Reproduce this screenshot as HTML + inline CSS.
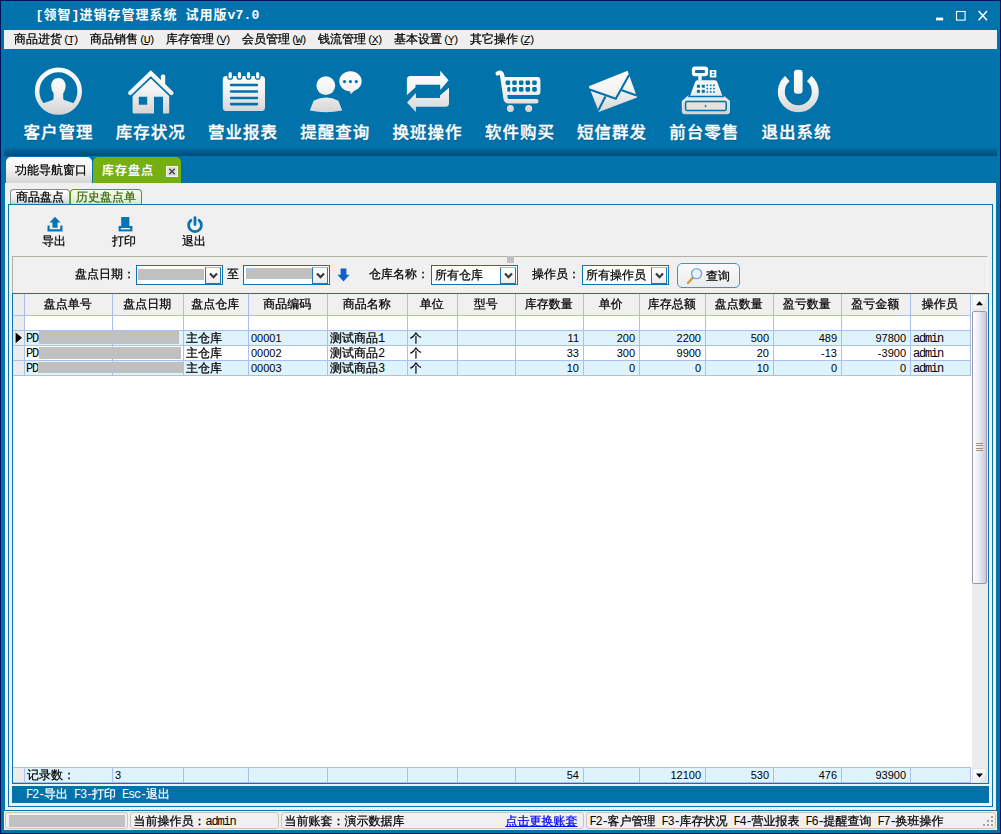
<!DOCTYPE html>
<html lang="zh-CN">
<head>
<meta charset="utf-8">
<title>[领智]进销存管理系统 试用版v7.0</title>
<style>
*{box-sizing:border-box;margin:0;padding:0}
html,body{width:1001px;height:834px;overflow:hidden;background:#0272aa}
body{position:relative;font-family:"Liberation Sans","WenQuanYi Zen Hei","Noto Sans CJK SC",sans-serif;font-size:12px;line-height:14px;color:#000;-webkit-text-stroke-width:.25px}
.abs{position:absolute}
#win{position:absolute;left:0;top:0;width:1001px;height:834px;background:#0272aa;border:1px solid #00145a}
/* title */
#title{-webkit-text-stroke-width:0;position:absolute;left:35.500px;top:8px;height:16px;line-height:16px;color:#fff;font-family:"Liberation Mono","Noto Sans CJK SC",monospace;font-weight:bold;font-size:13px;letter-spacing:.2px;white-space:pre}
#title span{letter-spacing:1px}
/* menu */
#menu{position:absolute;left:4px;top:30px;width:993px;height:19px;background:#efefef}
#menu span{position:absolute;top:2px;line-height:14px;white-space:pre}
em{font-style:normal;font-family:"Liberation Mono",monospace;font-size:12px;letter-spacing:-1.2px;-webkit-text-stroke-width:0}
#menu em{margin-left:1px;letter-spacing:-2.200px;font-size:11.500px}
/* toolbar */
.tl{-webkit-text-stroke-width:.35px;position:absolute;width:100px;top:122px;transform:scaleY(.95);transform-origin:50% 2px;margin-left:-.6px;text-align:center;font-family:"Liberation Sans","Noto Sans CJK SC",sans-serif;font-weight:500;font-size:16.500px;letter-spacing:1px;padding-left:1px;line-height:22px;color:#fff;text-shadow:0 1px 1px rgba(0,50,90,.45)}
#shadow{position:absolute;left:4px;top:147px;width:993px;height:9px;background:linear-gradient(#0272aa,#00649a 35%,#005484 75%,#004a78)}
/* tabs */
#tab1{position:absolute;left:6px;top:157px;width:86px;height:26px;border-radius:5px 5px 0 0;background:linear-gradient(#ffffff,#f4f4f4 45%,#d4d4d4);line-height:26px;padding-left:9px}
#tab2{-webkit-text-stroke-width:0;position:absolute;left:93px;top:157px;width:88px;height:26px;border-radius:5px 5px 0 0;background:#76b010;color:#fff;font-family:"Liberation Sans","Noto Sans CJK SC",sans-serif;font-weight:bold;line-height:28px;padding-left:9px;letter-spacing:1px}
#tab2 i{position:absolute;left:73px;top:9px;width:12px;height:11px;background:#dedede;border:1px solid #f4f4f4}
#tab2 i svg{position:absolute;left:0;top:0}
#content{position:absolute;left:5px;top:183px;width:991px;height:627px;background:#f0f0f0}
#st1{position:absolute;left:10px;top:189px;width:60px;height:15px;border:1px solid #8a8a8a;border-bottom:none;border-radius:4px 4px 0 0;background:linear-gradient(#ffffff,#ececec 60%,#cfcfcf);line-height:14px;padding-left:5px}
#st2{position:absolute;left:70px;top:189px;width:72px;height:16px;border:1px solid #5a9a1a;border-bottom:none;border-radius:4px 4px 0 0;background:linear-gradient(#f6fbee,#e8f0dc 60%,#d4e4c0);line-height:14px;padding-left:5px;color:#3c6a10}
#panel{position:absolute;left:8px;top:204px;width:985px;height:603px;border:1px solid #0a74b0;background:#f0f0f0}
.bl{position:absolute;top:234px;width:60px;text-align:center;line-height:14px}
#inner{position:absolute;left:12px;top:256px;width:976px;height:38px;border:1px solid #b4b0a4;border-bottom:none;border-right-color:#f8f8f8}
.lb{position:absolute;top:267px;line-height:14px;white-space:pre}
.cb{position:absolute;top:265px;height:20px;border:1px solid #0a74b0;background:#fff}
.cb b{position:absolute;left:3px;top:2px;font-weight:normal;line-height:14px;white-space:pre}
.dd{position:absolute;right:1px;top:1px;width:16px;height:17px;border:1px solid #1c7ab4;background:linear-gradient(#ffffff,#ececec);border-top-color:#9cc0dc}
.dd svg{position:absolute;left:-.5px;top:-1px}
.rd{position:absolute;background:#c0c0c0}
#qbtn{position:absolute;left:677px;top:263px;width:63px;height:25px;border:1px solid #4a90b8;border-radius:5px;background:linear-gradient(#fafafa,#ececec)}
#qbtn span{position:absolute;left:28px;top:5px;line-height:14px}
#grid{position:absolute;left:12px;top:293px;width:977px;height:491px;border:1px solid #0a74b0;background:#fff;overflow:hidden}
.hl{position:absolute;left:1px;width:957px;height:1px;background:#a9c0ee}
.vl{position:absolute;width:1px;background:#a9c0ee}
.hc{margin-left:-.7px;position:absolute;top:4px;height:14px;line-height:14px;text-align:center;white-space:pre}
.c{position:absolute;height:14px;line-height:14px;padding:0 2px;white-space:pre;overflow:hidden}
.c.t{font-size:11px;-webkit-text-stroke-width:0}
.c.n{text-align:right;padding-right:4px;font-size:11px;-webkit-text-stroke-width:0}
.c.s{font-family:"Liberation Serif","WenQuanYi Zen Hei",serif;letter-spacing:.5px}
#vs{position:absolute;left:960px;top:1px;width:16px;height:489px;background:#ececec}
.sb{position:absolute;left:0;width:15px;height:16px;background:linear-gradient(135deg,#fff,#f4f4f4 60%,#dcdcdc);border:1px solid #e4e4e4}
.sb svg{position:absolute;left:-1px;top:-1px}
#th{position:absolute;left:0;top:17px;width:15px;height:273px;border:1px solid #9898a8;border-radius:2px;background:linear-gradient(90deg,#ffffff,#ececf4 45%,#c8c8d8)}
#th i{position:absolute;left:3px;top:131px;width:7px;height:8px;background:repeating-linear-gradient(#a09474 0,#a09474 1px,transparent 1px,transparent 2.300px)}
#bluebar{position:absolute;left:12px;top:786px;width:977px;height:17px;background:#0272aa;color:#fff;line-height:16px;padding-left:14px;white-space:pre}
#sbline{position:absolute;left:5px;top:810px;width:991px;height:1px;background:#0a74b0}
#status{position:absolute;left:5px;top:811px;width:991px;height:19px;background:#f0f0f0;box-shadow:-1px 0 0 #f0f0f0,1px 0 0 #f0f0f0}
.sp{position:absolute;top:1px;height:17px;border:1px solid #c8c4b8;border-radius:3px}
.sp span{position:absolute;left:2.500px;top:1px;line-height:14px;white-space:pre}
.sp a{position:absolute;right:5.500px;top:1px;line-height:14px;color:#0000ff;text-decoration:underline;white-space:pre}
</style>
</head>
<body>
<div id="win"></div>
<div id="title">[<span>领智</span>]<span>进销存管理系统</span> <span>试用版</span>v7.0</div>
<!--WINCTL-->
<svg class="abs" style="left:930px;top:5px" width="64" height="20" viewBox="930 5 64 20"><rect x="936" y="17.600" width="7.200" height="2.800" fill="#fff"/><rect x="956.500" y="11.500" width="8.600" height="8.600" fill="none" stroke="#fff" stroke-width="1.100"/><path d="M978.600 11l8.400 9.200M987 11l-8.400 9.200" stroke="#fff" stroke-width="1.500" fill="none"/></svg>
<div id="menu">
<span style="left:10px">商品进货<em>(<u>T</u>)</em></span>
<span style="left:86px">商品销售<em>(<u>U</u>)</em></span>
<span style="left:162px">库存管理<em>(<u>V</u>)</em></span>
<span style="left:238px">会员管理<em>(<u>W</u>)</em></span>
<span style="left:314px">钱流管理<em>(<u>X</u>)</em></span>
<span style="left:390px">基本设置<em>(<u>Y</u>)</em></span>
<span style="left:466px">其它操作<em>(<u>Z</u>)</em></span>
</div>
<!--TOOLBAR-->
<svg id="tbsvg" class="abs" style="left:0;top:0" width="1001" height="160" viewBox="0 0 1001 160">
<defs>
<linearGradient id="wg" gradientUnits="userSpaceOnUse" x1="0" y1="68" x2="0" y2="115"><stop offset="0" stop-color="#ffffff"/><stop offset=".45" stop-color="#f4f4f4"/><stop offset="1" stop-color="#d2d2d2"/></linearGradient>
<clipPath id="uc"><circle cx="58.4" cy="91.2" r="20.600"/></clipPath>
</defs>
<g fill="url(#wg)" stroke="none">
<!-- 1 user -->
<circle cx="58.4" cy="91.2" r="21.3" fill="none" stroke="url(#wg)" stroke-width="4.6"/>
<g clip-path="url(#uc)"><path d="M58.400 77.900c4.400 0 7.200 3.400 7.200 7.800 0 3-1 5.600-2.400 7.600v4.600c0 1.200.6 1.900 1.800 2.300l10 3.600v12h-33.200v-12l10-3.600c1.200-.4 1.800-1.100 1.800-2.300v-4.600c-1.400-2-2.400-4.600-2.400-7.600 0-4.400 2.800-7.800 7.200-7.800z"/></g>
<!-- 2 house -->
<path d="M132.600 112v-17l18.200-17 18.400 17v17c0 1-.5 1.500-1.500 1.500h-4.700v-16.800h-9v16.800h-19.900c-1 0-1.500-.5-1.500-1.500zM138.800 96.700h8.400v8h-8.400z" fill-rule="evenodd"/>
<path d="M130.200 93l20.600-19.800 20.600 19.800" fill="none" stroke="#0272aa" stroke-width="7.600" stroke-linecap="round" stroke-linejoin="miter"/>
<rect x="160.900" y="74.600" width="4.300" height="12" rx="1.600"/>
<path d="M130.200 93l20.600-19.800 20.600 19.800" fill="none" stroke="url(#wg)" stroke-width="4.300" stroke-linecap="round" stroke-linejoin="miter"/>
<!-- 3 notepad -->
<rect x="222.800" y="76" width="42.200" height="35" rx="3.500"/>
<g stroke="#0272aa" stroke-width="1.300"><rect x="227.900" y="71.400" width="4.600" height="7.800" rx="2.300"/><rect x="237.100" y="71.400" width="4.600" height="7.800" rx="2.300"/><rect x="246.200" y="71.400" width="4.600" height="7.800" rx="2.300"/><rect x="255.400" y="71.400" width="4.600" height="7.800" rx="2.300"/></g>
<g fill="#0272aa"><rect x="229.800" y="83.700" width="28.400" height="2.600" rx="1.300"/><rect x="229.800" y="90.200" width="28.400" height="2.600" rx="1.300"/><rect x="229.800" y="96.700" width="28.400" height="2.600" rx="1.300"/><rect x="229.800" y="102.800" width="28.400" height="2.600" rx="1.300"/></g>
<!-- 4 person + bubble -->
<circle cx="325.800" cy="85.600" r="9.400"/>
<path d="M309.800 110.600l3.800-9.800q12.400-6.600 24.800 0l3.800 9.800q-16.200 3.400-32.400 0z"/>
<path d="M350.500 71.300c6.300 0 11.200 4.400 11.200 10 0 4.300-3 8-7.400 9.400l-3.600 3.600-.6-2.900c-6.100-.2-10.800-4.600-10.800-10.100 0-5.600 4.900-10 11.200-10z"/>
<g fill="#0272aa"><circle cx="344.500" cy="81.600" r="1.600"/><circle cx="350.400" cy="81.600" r="1.600"/><circle cx="356.300" cy="81.600" r="1.600"/></g>
<!-- 5 repeat -->
<path d="M406.900 95.300V79.500Q406.900 76 410.400 76H440.200V70.800L448.600 80.300 440.200 89.900V84.800H415.500V87.200z"/>
<path d="M449 87.700V103.300Q449 106.800 445.500 106.800H415.900V112L407 102.400 415.900 93.100V98H440V95.600z"/>
<!-- 6 cart -->
<path d="M497.800 73.400Q501.600 71.400 502.200 75.400L505.600 98.600Q506 101.200 508.600 101.200H536.400" fill="none" stroke="url(#wg)" stroke-width="4.400" stroke-linecap="round" stroke-linejoin="round"/>
<path d="M503 77h34.400q3 0 3 3v11.900q0 3-3 3h-32z"/>
<g fill="#0272aa"><rect x="505.6" y="80.400" width="4.600" height="4.600" rx="1.400"/><rect x="512.2" y="80.400" width="4.600" height="4.600" rx="1.400"/><rect x="518.9" y="80.400" width="4.600" height="4.600" rx="1.400"/><rect x="525.5" y="80.400" width="4.600" height="4.600" rx="1.400"/><rect x="532.2" y="80.400" width="4.600" height="4.600" rx="1.400"/><rect x="507.300" y="87.100" width="3" height="4.600" rx="1.300"/><rect x="512.2" y="87.100" width="4.600" height="4.600" rx="1.400"/><rect x="518.9" y="87.100" width="4.600" height="4.600" rx="1.400"/><rect x="525.5" y="87.100" width="4.600" height="4.600" rx="1.400"/><rect x="532.2" y="87.100" width="4.600" height="4.600" rx="1.400"/></g>
<circle cx="510.400" cy="108.600" r="3.500"/><circle cx="528.700" cy="108.600" r="3.500"/>
<!-- 7 envelope -->
<path d="M588.800 86.300l38.800-15.500 9.500 26.600-38.200 14.600z"/>
<path d="M589.600 89.400l26.200 9.400 13.400-24M598.400 110.200l7-13.600M636.600 95.500l-14.800-5.300" fill="none" stroke="#0272aa" stroke-width="2.100"/>
<!-- 8 register -->
<path d="M688.600 95.300h34.800l6.600 5.800v10.200q0 3-3 3h-42.200q-3 0-3-3v-10.200z"/>
<rect x="685.600" y="101.600" width="40.600" height="8.800" rx="1.400" fill="#e2e2e2" stroke="#0272aa" stroke-width="1.500"/>
<path d="M704.800 104.400l2 1.600-2 1.600z" fill="#0272aa"/>
<path d="M689 96.600l5.400-14.800q.8-2.200 3-2.200h17.600q2.200 0 3 2.200l5.400 14.800z" stroke="#0272aa" stroke-width="1.500"/>
<rect x="691.900" y="66.600" width="16.200" height="9.600" rx="3"/><rect x="695.100" y="70" width="9.800" height="3" rx=".6" fill="#0272aa"/>
<rect x="698.300" y="75.600" width="3.400" height="5"/>
<rect x="709.800" y="70" width="6.500" height="7.600" rx=".5"/><rect x="711.800" y="71.600" width="2.600" height="1.400" fill="#0272aa"/><rect x="711.800" y="74.200" width="2.600" height="1.400" fill="#0272aa"/>
<g fill="#0272aa"><rect x="696.900" y="84.800" width="3" height="2.900"/><rect x="701.800" y="84.800" width="3" height="2.900"/><rect x="696.900" y="89.900" width="3" height="2.900"/><rect x="701.800" y="89.900" width="3" height="2.900"/><rect x="706.5" y="84.5" width="1.600" height="1.600"/><rect x="706.5" y="87.8" width="1.600" height="1.600"/><rect x="706.5" y="91.1" width="1.600" height="1.600"/><rect x="709.9" y="84.5" width="1.600" height="1.600"/><rect x="709.9" y="87.8" width="1.600" height="1.600"/><rect x="709.9" y="91.1" width="1.600" height="1.600"/><rect x="713.2" y="84.5" width="1.600" height="1.600"/><rect x="713.2" y="87.8" width="1.600" height="1.600"/><rect x="713.2" y="91.1" width="1.600" height="1.600"/></g>
<!-- 9 power -->
<path d="M787.400 78.600a17 17 0 1 0 21.800 0" fill="none" stroke="url(#wg)" stroke-width="7" stroke-linecap="butt"/>
<rect x="792.400" y="68.200" width="11.800" height="27" rx="4.600" fill="#0272aa"/>
<rect x="793.900" y="69.700" width="8.700" height="24" rx="3.200"/>
</g>
</svg>
<b class="tl" style="left:8.700px">客户管理</b>
<b class="tl" style="left:100.900px">库存状况</b>
<b class="tl" style="left:193.200px">营业报表</b>
<b class="tl" style="left:285.400px">提醒查询</b>
<b class="tl" style="left:377.700px">换班操作</b>
<b class="tl" style="left:470px">软件购买</b>
<b class="tl" style="left:562.200px">短信群发</b>
<b class="tl" style="left:654.400px">前台零售</b>
<b class="tl" style="left:746.700px">退出系统</b>
<!--/TOOLBAR-->
<div id="shadow"></div>
<div id="tab1">功能导航窗口</div>
<div id="tab2">库存盘点<i><svg width="11" height="10" viewBox="0 0 11 10"><path d="M2.300 1.800l5.400 5.400M7.700 1.800l-5.400 5.400" stroke="#444" stroke-width="1.500" fill="none"/></svg></i></div>
<div id="content"></div>
<!--CONTENT-->
<div id="st1">商品盘点</div>
<div id="st2">历史盘点单</div>
<div id="panel"></div>
<svg class="abs" style="left:47px;top:216px" width="16" height="17" viewBox="0 0 16 17"><path d="M8 .8l5.600 5.600h-3v5.400h-5.200v-5.400h-3z" fill="#0a74b0"/><path d="M1.600 9.400v5h12.800v-5" fill="none" stroke="#0a74b0" stroke-width="2.200"/></svg>
<div class="bl" style="left:24px">导出</div>
<svg class="abs" style="left:117px;top:217px" width="17" height="16" viewBox="0 0 17 16"><rect x="4.200" y="0" width="8.200" height="9.200" fill="#0a74b0"/><path d="M1.600 9h13.800v5.400h-13.800z" fill="#0a74b0"/><rect x="3.800" y="11" width="9.400" height="1.400" fill="#f0f0f0"/></svg>
<div class="bl" style="left:94px">打印</div>
<svg class="abs" style="left:186px;top:216px" width="18" height="18" viewBox="0 0 18 18"><path d="M4.900 4.300a6.400 6.400 0 1 0 8.200 0" fill="none" stroke="#0a74b0" stroke-width="2.800" stroke-linecap="round"/><path d="M9 1.600v7" stroke="#0a74b0" stroke-width="2.800" stroke-linecap="round"/></svg>
<div class="bl" style="left:164px">退出</div>
<div id="inner"></div>
<div class="abs" style="left:507px;top:256px;width:7px;height:7px;background:#c0c0c0"></div>
<div class="lb" style="left:75px">盘点日期：</div>
<div class="cb" style="left:136px;width:87px"><div class="rd" style="left:1px;top:3px;width:66px;height:11px"></div><span class="dd"><svg width="15" height="17"><path d="M4 6.500l3.500 3.700 3.500-3.700" fill="none" stroke="#383838" stroke-width="2.200"/></svg></span></div>
<div class="lb" style="left:227px">至</div>
<div class="cb" style="left:243px;width:87px"><div class="rd" style="left:2px;top:2px;width:66px;height:11px"></div><span class="dd"><svg width="15" height="17"><path d="M4 6.500l3.500 3.700 3.500-3.700" fill="none" stroke="#383838" stroke-width="2.200"/></svg></span></div>
<svg class="abs" style="left:337px;top:268px" width="13" height="14" viewBox="0 0 13 14"><path d="M3.600.4h5.800v6.400h3.200l-6.100 6.800-6.100-6.800h3.200z" fill="#1060c8"/></svg>
<div class="lb" style="left:369px">仓库名称：</div>
<div class="cb" style="left:431px;width:87px"><b>所有仓库</b><span class="dd"><svg width="15" height="17"><path d="M4 6.500l3.500 3.700 3.500-3.700" fill="none" stroke="#383838" stroke-width="2.200"/></svg></span></div>
<div class="lb" style="left:532px">操作员：</div>
<div class="cb" style="left:582px;width:87px"><b>所有操作员</b><span class="dd"><svg width="15" height="17"><path d="M4 6.500l3.500 3.700 3.500-3.700" fill="none" stroke="#383838" stroke-width="2.200"/></svg></span></div>
<div id="qbtn"><svg class="abs" style="left:8px;top:3px" width="18" height="18" viewBox="0 0 18 18"><path d="M2 16l5-5.600" stroke="#d89838" stroke-width="2.400" stroke-linecap="round"/><circle cx="10.600" cy="6.600" r="5" fill="#e8f4fc" stroke="#78a8d0" stroke-width="1.400"/></svg><span>查询</span></div>
<div id="grid"><div class="abs" style="left:-1px;top:-1px">
<div class="abs" style="left:1px;top:1px;width:958px;height:22px;background:#f0f0f0"></div>
<div class="abs" style="left:1px;top:1px;width:11px;height:81px;background:#ececec"></div>
<div class="abs" style="left:12px;top:38px;width:947px;height:14px;background:#dff3fd"></div>
<div class="abs" style="left:12px;top:53px;width:947px;height:14px;background:#ffffff"></div>
<div class="abs" style="left:12px;top:68px;width:947px;height:14px;background:#dff3fd"></div>
<div class="abs" style="left:1px;top:475px;width:11px;height:14px;background:#ececec"></div>
<div class="abs" style="left:12px;top:475px;width:947px;height:14px;background:#dff3fd"></div>
<div class="hl" style="top:22px"></div>
<div class="hl" style="top:37px"></div>
<div class="hl" style="top:52px"></div>
<div class="hl" style="top:67px"></div>
<div class="hl" style="top:82px"></div>
<div class="hl" style="top:474px"></div><div class="hl" style="top:489px"></div>
<div class="vl" style="left:12px;top:1px;height:82px"></div>
<div class="vl" style="left:12px;top:474px;height:16px"></div>
<div class="vl" style="left:100px;top:1px;height:82px"></div>
<div class="vl" style="left:100px;top:474px;height:16px"></div>
<div class="vl" style="left:171px;top:1px;height:82px"></div>
<div class="vl" style="left:171px;top:474px;height:16px"></div>
<div class="vl" style="left:236px;top:1px;height:82px"></div>
<div class="vl" style="left:236px;top:474px;height:16px"></div>
<div class="vl" style="left:315px;top:1px;height:82px"></div>
<div class="vl" style="left:315px;top:474px;height:16px"></div>
<div class="vl" style="left:395px;top:1px;height:82px"></div>
<div class="vl" style="left:395px;top:474px;height:16px"></div>
<div class="vl" style="left:445px;top:1px;height:82px"></div>
<div class="vl" style="left:445px;top:474px;height:16px"></div>
<div class="vl" style="left:503px;top:1px;height:82px"></div>
<div class="vl" style="left:503px;top:474px;height:16px"></div>
<div class="vl" style="left:571px;top:1px;height:82px"></div>
<div class="vl" style="left:571px;top:474px;height:16px"></div>
<div class="vl" style="left:627px;top:1px;height:82px"></div>
<div class="vl" style="left:627px;top:474px;height:16px"></div>
<div class="vl" style="left:693px;top:1px;height:82px"></div>
<div class="vl" style="left:693px;top:474px;height:16px"></div>
<div class="vl" style="left:761px;top:1px;height:82px"></div>
<div class="vl" style="left:761px;top:474px;height:16px"></div>
<div class="vl" style="left:829px;top:1px;height:82px"></div>
<div class="vl" style="left:829px;top:474px;height:16px"></div>
<div class="vl" style="left:898px;top:1px;height:82px"></div>
<div class="vl" style="left:898px;top:474px;height:16px"></div>
<div class="vl" style="left:958px;top:1px;height:82px"></div>
<div class="vl" style="left:958px;top:474px;height:16px"></div>
<div class="hc" style="left:13px;width:87px">盘点单号</div>
<div class="hc" style="left:101px;width:70px">盘点日期</div>
<div class="hc" style="left:172px;width:64px">盘点仓库</div>
<div class="hc" style="left:237px;width:78px">商品编码</div>
<div class="hc" style="left:316px;width:79px">商品名称</div>
<div class="hc" style="left:396px;width:49px">单位</div>
<div class="hc" style="left:446px;width:57px">型号</div>
<div class="hc" style="left:504px;width:67px">库存数量</div>
<div class="hc" style="left:572px;width:55px">单价</div>
<div class="hc" style="left:628px;width:65px">库存总额</div>
<div class="hc" style="left:694px;width:67px">盘点数量</div>
<div class="hc" style="left:762px;width:67px">盈亏数量</div>
<div class="hc" style="left:830px;width:68px">盈亏金额</div>
<div class="hc" style="left:899px;width:59px">操作员</div>
<div class="c" style="left:13px;top:38px;width:87px"><em style="margin-left:-1px">PD</em></div>
<div class="c" style="left:172px;top:38px;width:64px">主仓库</div>
<div class="c t" style="left:237px;top:38px;width:78px">00001</div>
<div class="c" style="left:316px;top:38px;width:79px">测试商品<em>1</em></div>
<div class="c" style="left:396px;top:38px;width:49px">个</div>
<div class="c n" style="left:504px;top:38px;width:67px">11</div>
<div class="c n" style="left:572px;top:38px;width:55px">200</div>
<div class="c n" style="left:628px;top:38px;width:65px">2200</div>
<div class="c n" style="left:694px;top:38px;width:67px">500</div>
<div class="c n" style="left:762px;top:38px;width:67px">489</div>
<div class="c n" style="left:830px;top:38px;width:68px">97800</div>
<div class="c" style="left:899px;top:38px;width:59px"><em>admin</em></div>
<div class="c" style="left:13px;top:53px;width:87px"><em style="margin-left:-1px">PD</em></div>
<div class="c" style="left:172px;top:53px;width:64px">主仓库</div>
<div class="c t" style="left:237px;top:53px;width:78px">00002</div>
<div class="c" style="left:316px;top:53px;width:79px">测试商品<em>2</em></div>
<div class="c" style="left:396px;top:53px;width:49px">个</div>
<div class="c n" style="left:504px;top:53px;width:67px">33</div>
<div class="c n" style="left:572px;top:53px;width:55px">300</div>
<div class="c n" style="left:628px;top:53px;width:65px">9900</div>
<div class="c n" style="left:694px;top:53px;width:67px">20</div>
<div class="c n" style="left:762px;top:53px;width:67px">-13</div>
<div class="c n" style="left:830px;top:53px;width:68px">-3900</div>
<div class="c" style="left:899px;top:53px;width:59px"><em>admin</em></div>
<div class="c" style="left:13px;top:68px;width:87px"><em style="margin-left:-1px">PD</em></div>
<div class="c" style="left:172px;top:68px;width:64px">主仓库</div>
<div class="c t" style="left:237px;top:68px;width:78px">00003</div>
<div class="c" style="left:316px;top:68px;width:79px">测试商品<em>3</em></div>
<div class="c" style="left:396px;top:68px;width:49px">个</div>
<div class="c n" style="left:504px;top:68px;width:67px">10</div>
<div class="c n" style="left:572px;top:68px;width:55px">0</div>
<div class="c n" style="left:628px;top:68px;width:65px">0</div>
<div class="c n" style="left:694px;top:68px;width:67px">10</div>
<div class="c n" style="left:762px;top:68px;width:67px">0</div>
<div class="c n" style="left:830px;top:68px;width:68px">0</div>
<div class="c" style="left:899px;top:68px;width:59px"><em>admin</em></div>
<div class="c" style="left:13px;top:475px;width:87px">记录数：</div>
<div class="c t" style="left:101px;top:475px;width:70px">3</div>
<div class="c n" style="left:504px;top:475px;width:67px">54</div>
<div class="c n" style="left:628px;top:475px;width:65px">12100</div>
<div class="c n" style="left:694px;top:475px;width:67px">530</div>
<div class="c n" style="left:762px;top:475px;width:67px">476</div>
<div class="c n" style="left:830px;top:475px;width:68px">93900</div>
<div class="rd" style="left:27px;top:38px;width:140px;height:13px"></div>
<div class="rd" style="left:27px;top:54px;width:142px;height:12px"></div>
<div class="rd" style="left:26px;top:69px;width:145px;height:11px"></div>
<svg class="abs" style="left:3px;top:39px" width="8" height="12"><path d="M.6.4l6.400 5.400-6.400 5.400z" fill="#000"/></svg>
<div id="vs"><div class="sb" style="top:0"><svg width="15" height="17"><path d="M4 11.200l3.500-4 3.500 4z" fill="#000"/></svg></div><div id="th"><i></i></div><div class="sb" style="bottom:0;height:15px"><svg width="15" height="15"><path d="M4 5.500l3.500 4 3.500-4z" fill="#000"/></svg></div></div>
</div></div>
<div id="bluebar"><em>F2-</em>导出<em> F3-</em>打印<em> Esc-</em>退出</div>
<!--/CONTENT-->
<!--STATUS-->
<div id="sbline"></div>
<div id="status">
<div class="sp" style="left:0;width:123px"><div class="rd" style="left:3px;top:2px;width:116px;height:12px"></div></div>
<div class="sp" style="left:125px;width:149px"><span>当前操作员：<em>admin</em></span></div>
<div class="sp" style="left:276px;width:303px"><span>当前账套：演示数据库</span><a>点击更换账套</a></div>
<div class="sp" style="left:581px;width:410px"><span><em>F2-</em>客户管理<em> F3-</em>库存状况<em> F4-</em>营业报表<em> F6-</em>提醒查询<em> F7-</em>换班操作</span></div>
<svg class="abs" style="left:978px;top:5px" width="12" height="12"><g fill="#a8a08c"><rect x="8" y="0" width="2" height="2"/><rect x="4" y="4" width="2" height="2"/><rect x="8" y="4" width="2" height="2"/><rect x="0" y="8" width="2" height="2"/><rect x="4" y="8" width="2" height="2"/><rect x="8" y="8" width="2" height="2"/></g></svg>
</div>
<!--/STATUS-->
</body>
</html>
